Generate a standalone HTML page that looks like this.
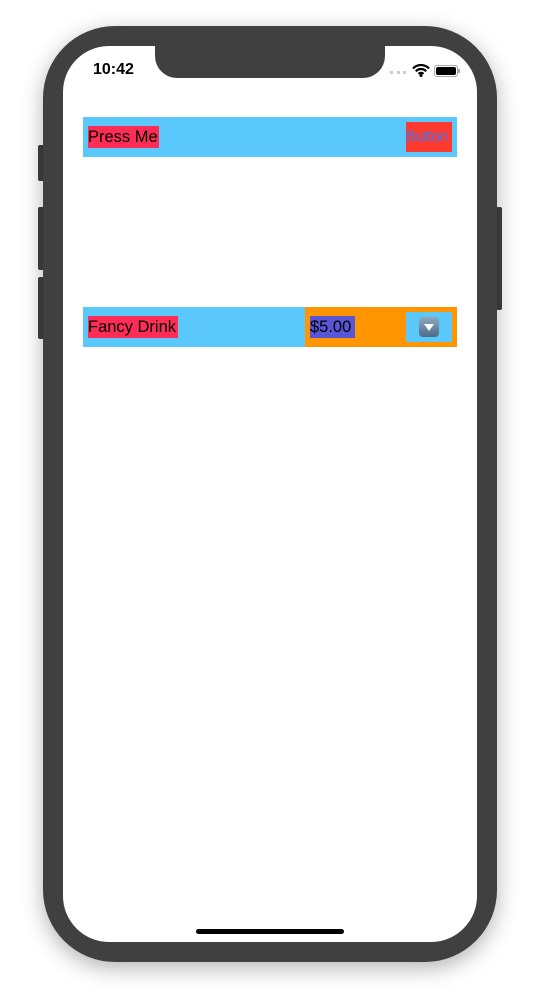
<!DOCTYPE html>
<html><head><meta charset="utf-8"><style>
*{margin:0;padding:0;box-sizing:border-box}
body{width:540px;height:1004px;background:#fff;position:relative;overflow:hidden;font-family:"Liberation Sans",sans-serif}
.a{position:absolute}
.phone{left:43px;top:26px;width:454px;height:936px;background:#404040;border-radius:72px;box-shadow:0 6px 22px rgba(0,0,0,.3)}
.screen{left:63px;top:46px;width:414px;height:896px;background:#fff;border-radius:46px;overflow:hidden}
.btn{background:#404040;border-radius:2px}
.t{font-size:16.5px;color:#000;line-height:22px;white-space:nowrap}
</style></head><body>
<div class="a btn" style="left:38px;top:145px;width:6px;height:36px"></div>
<div class="a btn" style="left:38px;top:207px;width:6px;height:63px"></div>
<div class="a btn" style="left:38px;top:277px;width:6px;height:62px"></div>
<div class="a btn" style="left:496px;top:207px;width:6px;height:103px"></div>
<div class="a phone"></div>
<div class="a screen"></div>
<div class="a" style="left:155px;top:40px;width:230px;height:38px;background:#404040;border-radius:0 0 22px 22px"></div>
<div class="a" style="left:93px;top:61px;font-size:16px;font-weight:bold;color:#000">10:42</div>
<div class="a" style="left:390px;top:71px;width:16px;height:3px;border-top:3px dotted #ccc"></div>
<svg class="a" style="left:412px;top:64px" width="18" height="13" viewBox="0 0 18 13"><path d="M1 4.5a11 11 0 0 1 16 0M3.8 7.3a7 7 0 0 1 10.4 0M6.6 10a3 3 0 0 1 4.8 0" stroke="#000" stroke-width="2.2" fill="none"/><circle cx="9" cy="11.5" r="1.5"/></svg>
<div class="a" style="left:434px;top:65px;width:24px;height:12px;border:1px solid #aaa;border-radius:3px;padding:1px"><div style="background:#000;width:100%;height:100%;border-radius:2px"></div></div>
<div class="a" style="left:458px;top:69px;width:2px;height:4px;background:#aaa"></div>

<div class="a" style="left:83px;top:117px;width:374px;height:40px;background:#5ac8fa"></div>
<div class="a t" style="left:88px;top:126px;width:71px;height:22px;background:#ff2d55">Press Me</div>
<div class="a" style="left:406px;top:122px;width:46px;height:30px;background:#ff3b30"></div>
<div class="a" style="left:406px;top:126px;color:#3478f6;font-size:15px;line-height:22px;white-space:nowrap;letter-spacing:-0.3px">Button</div>

<div class="a" style="left:83px;top:307px;width:374px;height:40px;background:#5ac8fa"></div>
<div class="a t" style="left:88px;top:316px;width:90px;height:22px;background:#ff2d55">Fancy Drink</div>
<div class="a" style="left:305px;top:307px;width:152px;height:40px;background:#ff9500"></div>
<div class="a t" style="left:310px;top:316px;width:45px;height:22px;background:#5856d6">$5.00</div>
<div class="a" style="left:406px;top:312px;width:46px;height:30px;background:#5ac8fa"></div>
<div class="a" style="left:419px;top:317px;width:20px;height:20px;border-radius:4px;background:linear-gradient(#8fa8c0,#4e6a88)"></div>
<svg class="a" style="left:419px;top:317px" width="20" height="20"><path d="M5 7h10l-5 7z" fill="#fff"/></svg>

<div class="a" style="left:196px;top:929px;width:148px;height:5px;background:#000;border-radius:3px"></div>
</body></html>
